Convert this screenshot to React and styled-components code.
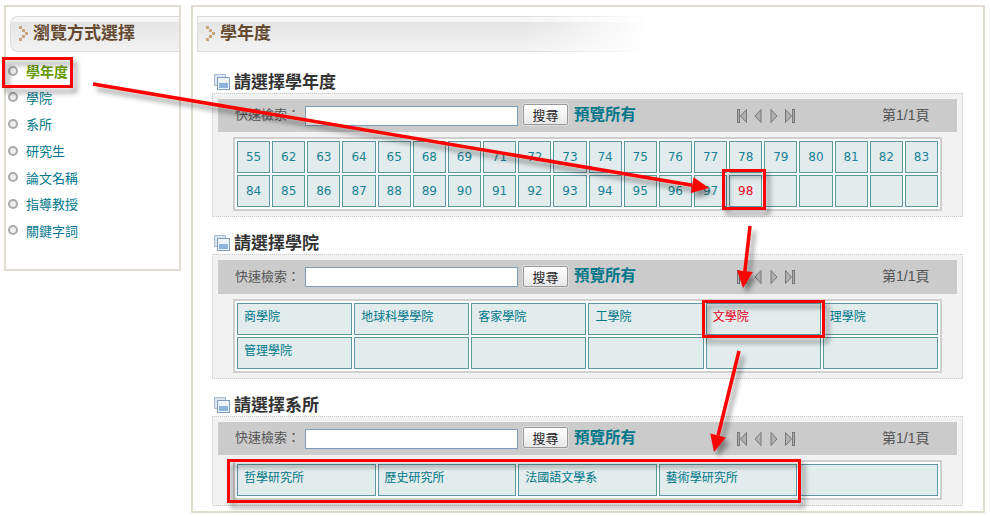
import React from 'react';
import styled, { createGlobalStyle } from 'styled-components';

const Global = createGlobalStyle`
  html, body { margin: 0; padding: 0; background: #fff; }
  body { font-family: "Liberation Sans", "Noto Sans CJK TC", sans-serif; }
`;
const CJK = `"Liberation Sans", "Noto Sans CJK TC", sans-serif`;

const Page = styled.div`
  position: relative; width: 990px; height: 517px; overflow: hidden;
  display: flex; align-items: flex-start; gap: 10px; padding: 5px 0 0 4px; box-sizing: border-box;
`;
const Panel = styled.div`
  box-sizing: border-box; border: 2px solid #e0dcd0; background: #fff;
  width: ${p => p.$w}px; height: ${p => p.$h}px; padding: 9px 0 0 4px; flex: none;
`;
const Heading = styled.div`
  box-sizing: border-box; height: 36px; display: flex; align-items: center; gap: 3px; padding-left: 8px;
  border: 1px solid #dcdcdc; border-right: none; border-radius: 8px 0 0 8px;
  font: bold 17px/20px ${CJK}; color: #63492f;
  background: linear-gradient(180deg, #f6f6f6 0, #f6f6f6 5px, #e4e4e4 5px, #f3f3f3 100%);
  ${p => p.$fade && `
    width: 453px; border-right: none;
    background:
      linear-gradient(90deg, rgba(255,255,255,0) 72%, #fff 100%),
      linear-gradient(180deg, #f6f6f6 0, #f6f6f6 5px, #e4e4e4 5px, #f3f3f3 100%);
    border-image: linear-gradient(90deg, #dcdcdc 72%, #fff 100%) 1;
    border-image-slice: 1;
    border-left: 1px solid #dcdcdc;
    border-radius: 0;
  `}
`;
const Menu = styled.ul`list-style: none; margin: 5.500px 0 0; padding: 0;`;
const MenuItem = styled.li`
  height: 26.6px; display: flex; align-items: center; gap: 8px; margin-left: -2px;
  font: ${p => p.$active ? 'bold 14px' : 'normal 13px'} ${CJK}; color: ${p => p.$active ? '#669900' : '#00778a'};
`;
const Bullet = styled.span`
  box-sizing: border-box; width: 10px; height: 10px; border-radius: 50%; flex: none;
  border: 2px solid #aaa; background: #eee;
`;
const Section = styled.section`margin: ${p => p.$top}px 0 0 15px; width: 751px;`;
const Title = styled.h2`
  margin: 0; height: 20px; display: flex; align-items: center; gap: 4px; padding-left: 2px;
  font: bold 17px/18px ${CJK}; color: #333;
`;
const TitleText = styled.span`margin-top: 2px;`;
const Box = styled.div`
  box-sizing: border-box; margin-top: 1px; border: 1px dotted #c8c8c8; background: #f2f2f2; padding: 5px;
`;
const Toolbar = styled.div`
  height: ${p => p.$h}px; background: #cbcbcb; display: flex; align-items: center; padding-left: 17px;
  font: 13px ${CJK}; color: #555;
`;
const SearchLabel = styled.span`width: 70px; flex: none; margin-bottom: 4px;`;
const SearchInput = styled.input`
  box-sizing: border-box; width: 213px; height: 20px; border: 1px solid #7f9db9; background: #fff; padding: 0; flex: none;
`;
const SearchButton = styled.button`
  box-sizing: border-box; width: 45px; height: 21px; margin: 0 0 2px 5px; padding: 0 0 2px; flex: none;
  border: 1px solid #999; border-radius: 2px; background: linear-gradient(180deg,#fff,#e8e8e8);
  box-shadow: 0 0 0 1px #ddd; font: 13px ${CJK}; color: #222;
`;
const PreviewLink = styled.a`
  margin: 0 0 6px 6px; width: 163px; flex: none; font: bold 15.500px ${CJK}; color: #00778a;
`;
const Pager = styled.div`display: flex; align-items: center; gap: 6px; width: 145px; flex: none;`;
const PageInfo = styled.span`font: 14px ${CJK}; color: #555; margin-bottom: 4px;`;
const GridFrame = styled.div`
  box-sizing: border-box; margin: 5px 15px 0; border: 2px solid #cfcfcf; background: #fff; padding: 2px;
`;
const Grid = styled.div`
  display: grid; grid-template-columns: repeat(${p => p.$cols}, 1fr); gap: 2px;
`;
const Cell = styled.div`
  box-sizing: border-box; height: 32px; min-width: 0; border: 1px solid #5b98a2; background: #e2ecec;
  font: 12px ${p => p.$num ? `"DejaVu Sans", sans-serif` : CJK};
  color: ${p => p.$active ? '#ee0022' : p.$num ? '#1a8296' : '#00778a'};
  ${p => p.$num
    ? 'display: flex; align-items: center; justify-content: center;'
    : 'padding: 5px 0 0 6px; line-height: 16px;'}
`;
const Overlay = styled.svg`position: absolute; left: 0; top: 0; pointer-events: none;`;

const Chevron = () => (
  <svg width="11" height="16" viewBox="0 0 11 16" shapeRendering="crispEdges" fill="#c8a57a">
    <rect x="0" y="0" width="3" height="3" /><rect x="3" y="3" width="3" height="3" />
    <rect x="6" y="6" width="3" height="3" /><rect x="3" y="9" width="3" height="3" />
    <rect x="0" y="12" width="3" height="3" />
  </svg>
);
const WinIcon = () => (
  <svg width="16" height="16" viewBox="0 0 16 16" style={{ flex: 'none' }}>
    <rect x="0.5" y="0.5" width="11" height="11" fill="#dde6f0" stroke="#a8bcd4" />
    <rect x="3.5" y="3.5" width="12" height="12" fill="#eef3f8" stroke="#7f9fc0" />
    <rect x="5" y="9" width="9" height="5" fill="#8db4dc" />
  </svg>
);
const PagerIcon = ({ kind }) => {
  const shapes = {
    first: <><rect x="0.500" y="0.500" width="2" height="13" /><path d="M9.500 0.500v13L3.500 7z" /></>,
    prev: <path d="M8 0.500v13L2 7z" />,
    next: <path d="M2 0.500v13L8 7z" />,
    last: <><rect x="7.500" y="0.500" width="2" height="13" /><path d="M0.500 0.500v13L6.500 7z" /></>,
  };
  return <svg width="10" height="14" viewBox="0 0 10 14" fill="#b0b0b0" stroke="#777" strokeWidth="1">{shapes[kind]}</svg>;
};

const years = [55,62,63,64,65,68,69,71,72,73,74,75,76,77,78,79,80,81,82,83,84,85,86,87,88,89,90,91,92,93,94,95,96,97,98,'','','','',''];
const colleges = ['商學院','地球科學學院','客家學院','工學院','文學院','理學院','管理學院','','','','',''];
const depts = ['哲學研究所','歷史研究所','法國語文學系','藝術學研究所',''];
const menu = ['學年度','學院','系所','研究生','論文名稱','指導教授','關鍵字詞'];

const SearchSection = ({ title, top, cols, items, num, active, barH = 33 }) => (
  <Section $top={top}>
    <Title><WinIcon /><TitleText>{title}</TitleText></Title>
    <Box>
      <Toolbar $h={barH}>
        <SearchLabel>快速檢索：</SearchLabel>
        <SearchInput />
        <SearchButton>搜尋</SearchButton>
        <PreviewLink>預覽所有</PreviewLink>
        <Pager>
          <PagerIcon kind="first" /><PagerIcon kind="prev" /><PagerIcon kind="next" /><PagerIcon kind="last" />
        </Pager>
        <PageInfo>第1/1頁</PageInfo>
      </Toolbar>
      <GridFrame>
        <Grid $cols={cols}>
          {items.map((t, i) => <Cell key={i} $num={num} $active={t === active}>{t}</Cell>)}
        </Grid>
      </GridFrame>
    </Box>
  </Section>
);

const Arrow = ({ x1, y1, x2, y2, head = 17, hw = 8 }) => {
  const a = Math.atan2(y2 - y1, x2 - x1);
  const bx = x2 - head * Math.cos(a), by = y2 - head * Math.sin(a);
  const nx = -Math.sin(a) * hw, ny = Math.cos(a) * hw;
  return (
    <g>
      <line x1={x1} y1={y1} x2={bx} y2={by} stroke="#f00" strokeWidth="3.500" />
      <polygon points={`${x2},${y2} ${bx + nx},${by + ny} ${bx - nx},${by - ny}`} fill="#f00" />
    </g>
  );
};

export default function App() {
  return (
    <>
      <Global />
      <Page>
        <Panel $w={177} $h={266}>
          <Heading><Chevron />瀏覽方式選擇</Heading>
          <Menu>
            {menu.map((m, i) => <MenuItem key={m} $active={i === 0}><Bullet />{m}</MenuItem>)}
          </Menu>
        </Panel>
        <Panel $w={794} $h={508}>
          <Heading $fade><Chevron />學年度</Heading>
          <SearchSection title="請選擇學年度" top={20} cols={20} items={years} num active={98} />
          <SearchSection title="請選擇學院" top={16} cols={6} items={colleges} active="文學院" barH={34} />
          <SearchSection title="請選擇系所" top={16} cols={5} items={depts} />
        </Panel>
        <Overlay width="990" height="517" viewBox="0 0 990 517">
          <defs>
            <filter id="sh" x="0" y="0" width="990" height="517" filterUnits="userSpaceOnUse">
              <feDropShadow dx="4" dy="5" stdDeviation="2.500" floodColor="#000" floodOpacity="0.4" />
            </filter>
          </defs>
          <g filter="url(#sh)" fill="none" stroke="#f00" strokeWidth="3">
            <rect x="3.500" y="58.500" width="68" height="28" />
            <rect x="723.500" y="170.500" width="41" height="38" />
            <rect x="703.500" y="301.500" width="120" height="35" />
            <rect x="228.500" y="460.500" width="571" height="41" />
          </g>
          <g filter="url(#sh)">
            <Arrow x1={93} y1={84} x2={709} y2={188} />
            <Arrow x1={750} y1={226} x2={743} y2={288} />
            <Arrow x1={739} y1={351} x2={714} y2={452} />
          </g>
        </Overlay>
      </Page>
    </>
  );
}
